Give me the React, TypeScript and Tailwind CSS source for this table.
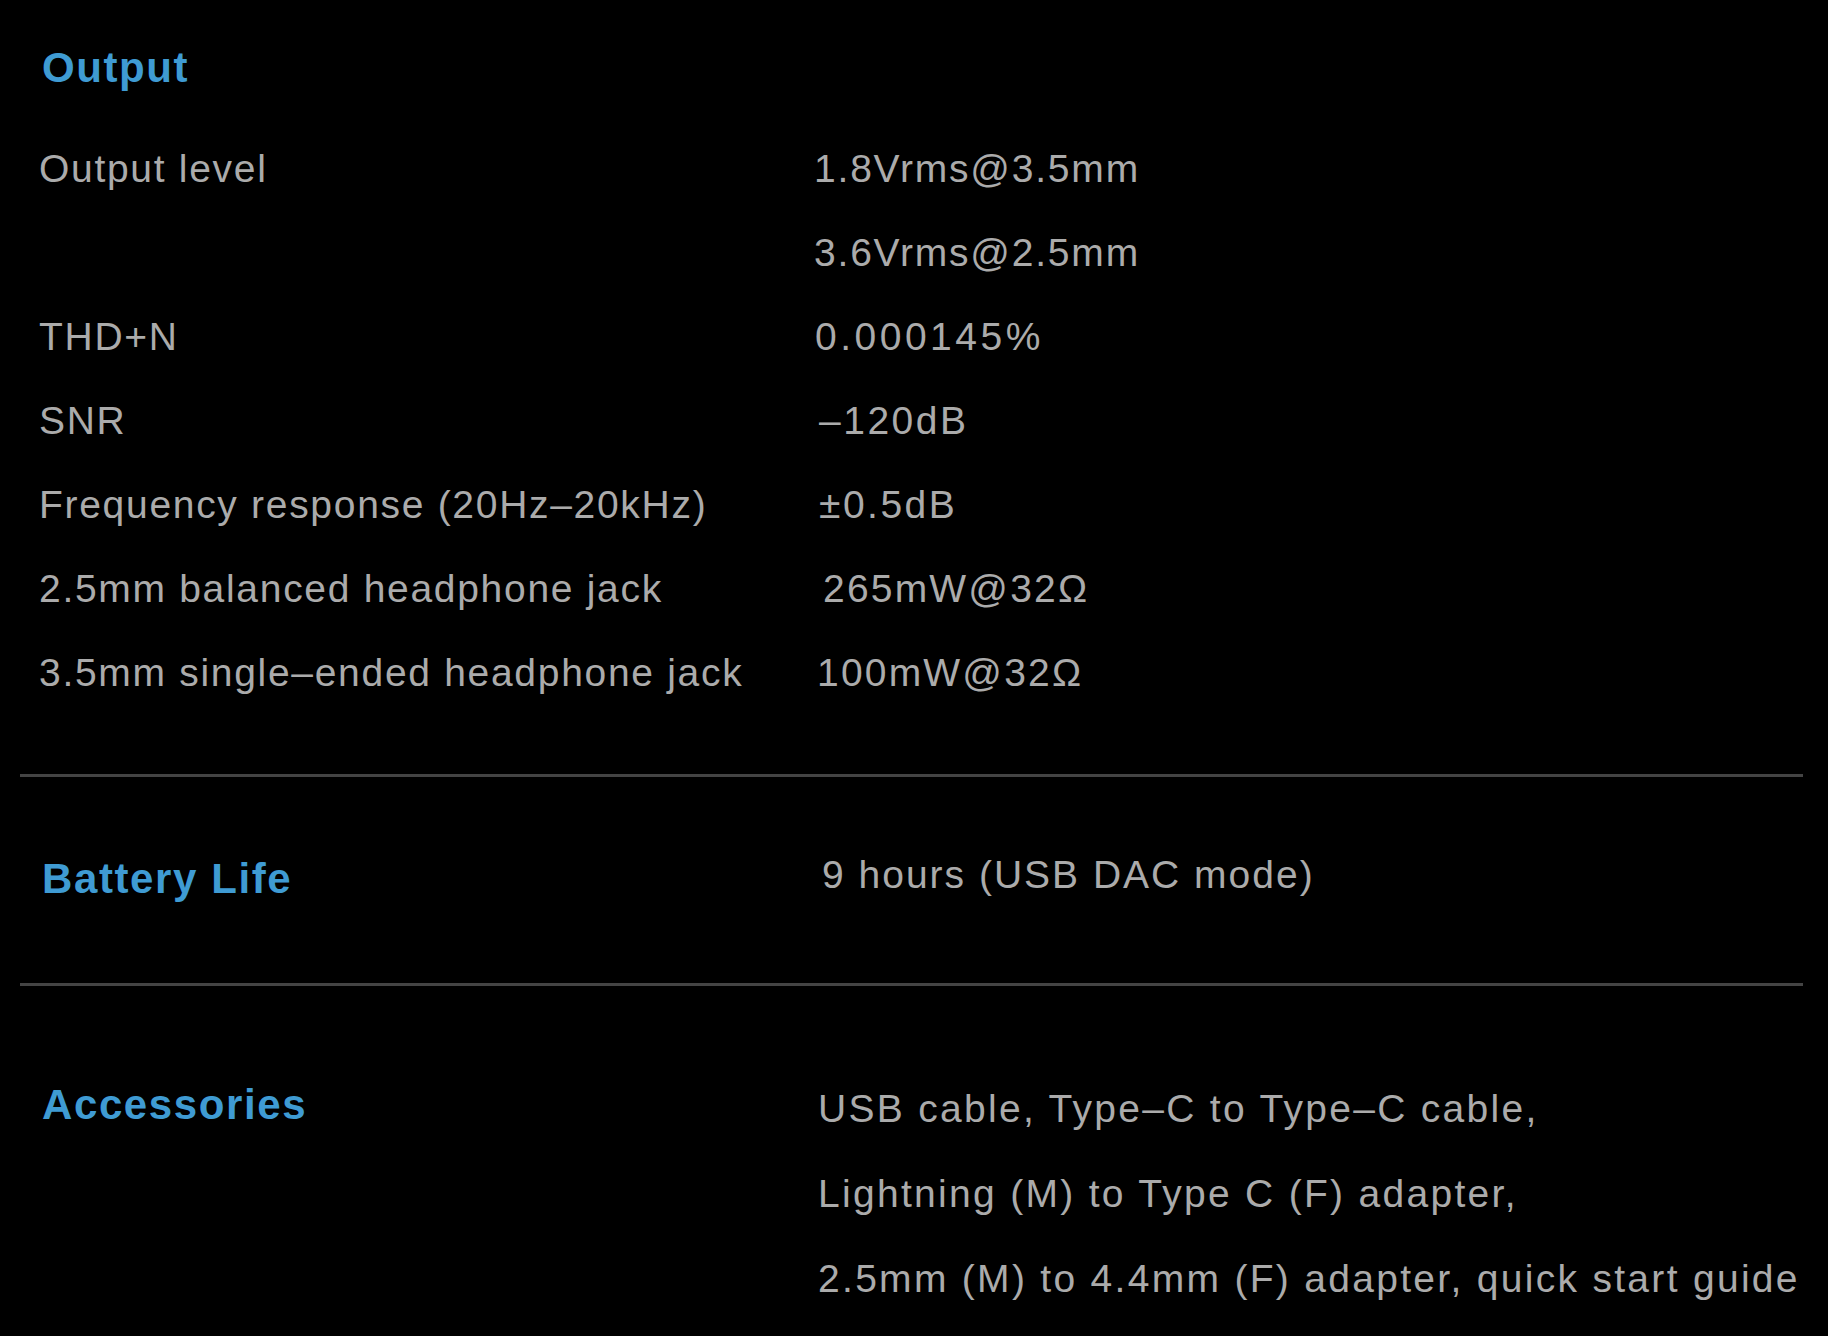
import React from "react";

type Row = { label: string; value: string; shift: string };

const outputRows: Row[] = [
  { label: "Output level", value: "1.8Vrms@3.5mm", shift: "pl-[1px]" },
  { label: "", value: "3.6Vrms@2.5mm", shift: "pl-[1px]" },
  { label: "THD+N", value: "0.000145%", shift: "pl-[2px] tracking-[3.5px]" },
  { label: "SNR", value: "–120dB", shift: "pl-[6px] tracking-[2.5px]" },
  { label: "Frequency response (20Hz–20kHz)", value: "±0.5dB", shift: "pl-[6px] tracking-[2.5px]" },
  { label: "2.5mm balanced headphone jack", value: "265mW@32Ω", shift: "pl-[10px] tracking-[2.2px]" },
  { label: "3.5mm single–ended headphone jack", value: "100mW@32Ω", shift: "pl-[4px] tracking-[2.2px]" },
];

const accessories = [
  "USB cable, Type–C to Type–C cable,",
  "Lightning (M) to Type C (F) adapter,",
  "2.5mm (M) to 4.4mm (F) adapter, quick start guide",
];

function Heading({ children }: { children: React.ReactNode }) {
  return (
    <h2 className="pl-[22px] text-[42px] font-bold tracking-[1.6px] text-[#3f9bd3] whitespace-nowrap">
      {children}
    </h2>
  );
}

export default function App() {
  return (
    <div className="min-h-[1336px] w-full bg-black pl-[20px] pr-[25px] pt-[38px] font-['Liberation_Sans',Arial,sans-serif] text-[#ababab] antialiased">
      {/* Output */}
      <section>
        <div className="leading-[60px]">
          <Heading>Output</Heading>
        </div>
        <div className="mt-[29px] flex flex-col">
          {outputRows.map((r, i) => (
            <div key={i} className="grid grid-cols-[793px_1fr] text-[39px] leading-[84px] tracking-[1.8px] whitespace-nowrap">
              <div className="pl-[19px] tracking-[1.7px]">{r.label}</div>
              <div className={r.shift}>{r.value}</div>
            </div>
          ))}
        </div>
      </section>

      <div className="mt-[59px] h-[3px] w-full bg-[#444444]" />

      {/* Battery Life */}
      <section className="grid grid-cols-[793px_1fr] pt-[56px]">
        <div className="pt-[4px] leading-[84px]">
          <Heading>Battery Life</Heading>
        </div>
        <div className="pl-[9px] text-[39px] leading-[84px] tracking-[2px] whitespace-nowrap">
          9 hours (USB DAC mode)
        </div>
      </section>

      <div className="mt-[62px] h-[3px] w-full bg-[#444444]" />

      {/* Accessories */}
      <section className="grid grid-cols-[793px_1fr] pt-[76px]">
        <div className="leading-[85px]">
          <Heading>Accessories</Heading>
        </div>
        <div className="flex flex-col pt-[4px] pl-[5px] text-[39px] leading-[85px] tracking-[2.3px] whitespace-nowrap">
          {accessories.map((line, i) => (
            <div key={i}>{line}</div>
          ))}
        </div>
      </section>
    </div>
  );
}
